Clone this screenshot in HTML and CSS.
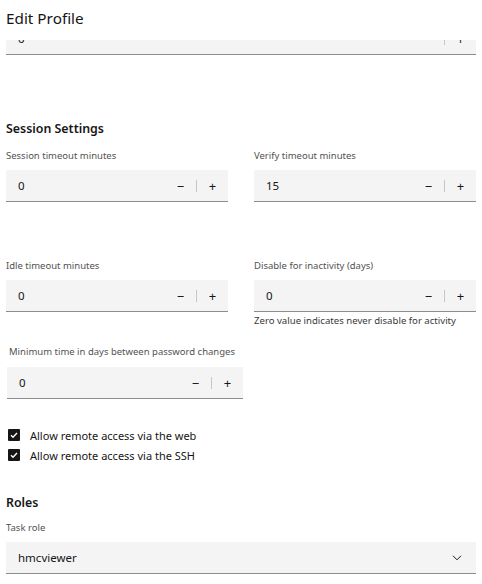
FILE: index.html
```html
<!DOCTYPE html>
<html>
<head>
	<title>Edit Profile</title>
	<meta charset="utf-8">
	<link rel="stylesheet" href="styles.css">
</head>
<body>
<div class="header">
	<h1 class="title">Edit Profile</h1>
</div>
<div class="body">
	<div class="content">
		<div class="field first">
			<span class="value">0</span>
			<div class="steps">
				<button class="step">&minus;</button>
				<span class="sep"></span>
				<button class="step">+</button>
			</div>
		</div>

		<h2 class="section">Session Settings</h2>
		<div class="grid">
			<div class="item">
				<label class="label">Session timeout minutes</label>
				<div class="field">
					<span class="value">0</span>
					<div class="steps">
						<button class="step">&minus;</button>
						<span class="sep"></span>
						<button class="step">+</button>
					</div>
				</div>
			</div>
			<div class="item">
				<label class="label">Verify timeout minutes</label>
				<div class="field">
					<span class="value">15</span>
					<div class="steps">
						<button class="step">&minus;</button>
						<span class="sep"></span>
						<button class="step">+</button>
					</div>
				</div>
			</div>
			<div class="item">
				<label class="label">Idle timeout minutes</label>
				<div class="field">
					<span class="value">0</span>
					<div class="steps">
						<button class="step">&minus;</button>
						<span class="sep"></span>
						<button class="step">+</button>
					</div>
				</div>
			</div>
			<div class="item">
				<label class="label">Disable for inactivity (days)</label>
				<div class="field">
					<span class="value">0</span>
					<div class="steps">
						<button class="step">&minus;</button>
						<span class="sep"></span>
						<button class="step">+</button>
					</div>
				</div>
				<div class="helper">Zero value indicates never disable for activity</div>
			</div>
		</div>

		<div class="item single">
			<label class="label">Minimum time in days between password changes</label>
			<div class="field">
				<span class="value">0</span>
				<div class="steps">
					<button class="step">&minus;</button>
					<span class="sep"></span>
					<button class="step">+</button>
				</div>
			</div>
		</div>

		<div class="checks">
			<label class="check"><span class="box"><svg width="10" height="10" viewBox="0 0 10 10"><path d="M2 5.2l2 2L8 3" fill="none" stroke="#fff" stroke-width="1.4"/></svg></span>Allow remote access via the web</label>
			<label class="check"><span class="box"><svg width="10" height="10" viewBox="0 0 10 10"><path d="M2 5.2l2 2L8 3" fill="none" stroke="#fff" stroke-width="1.4"/></svg></span>Allow remote access via the SSH</label>
		</div>

		<h2 class="section roles">Roles</h2>
		<label class="label">Task role</label>
		<div class="field select">
			<span class="value">hmcviewer</span>
			<svg class="chev" width="10" height="6" viewBox="0 0 10 6"><path d="M1 0.8l4 4 4-4" fill="none" stroke="#161616" stroke-width="1"/></svg>
		</div>
	</div>
</div>
</body>
</html>
```

FILE: styles.css
```css
body,div,h1,h2,label{margin:0;padding:0;}
body{
	background:#fff;
	color:#161616;
	font-family:"Noto Sans","DejaVu Sans",sans-serif;
	width:482px;
	height:584px;
	overflow:hidden;
}

.header{
	height:40px;
	padding-left:6px;
}
.title{
	font-size:15.3px;
	font-weight:400;
	line-height:20px;
	padding-top:8px;
}

.body{
	height:544px;
	overflow:hidden;
}
.content{
	margin-top:-17px;
	padding:0 6px;
}

.field{
	display:flex;
	align-items:center;
	height:31px;
	background:#f4f4f4;
	border-bottom:1px solid #8d8d8d;
	padding-left:12px;
}
.field .value{
	flex:1;
	font-size:11.5px;
}
.steps{
	display:flex;
	align-items:center;
	height:100%;
}
.step{
	width:31px;
	height:100%;
	border:0;
	padding:0;
	background:none;
	font:13px "Noto Sans",sans-serif;
	color:#161616;
}
.sep{
	width:1px;
	height:12px;
	background:#c6c6c6;
}

.section{
	font-size:12.4px;
	font-weight:600;
	line-height:16px;
	margin-top:66px;
}
.label{
	display:block;
	font-size:9.5px;
	line-height:14px;
	color:#525252;
	margin-bottom:7px;
	white-space:nowrap;
}

.grid{
	display:grid;
	grid-template-columns:222px 222px;
	column-gap:26px;
	row-gap:57px;
	margin-top:12px;
}
.helper{
	font-size:9.6px;
	line-height:14px;
	color:#393939;
	margin-top:2px;
}

.single{
	width:236px;
	margin:17px 0 0 1px;
}
.single .label{
	margin-left:2px;
	margin-bottom:8px;
}

.checks{
	margin:26px 0 0 2px;
}
.check{
	display:flex;
	align-items:center;
	height:20px;
	font-size:11px;
}
.box{
	display:flex;
	align-items:center;
	justify-content:center;
	width:12px;
	height:12px;
	background:#161616;
	border-radius:1px;
	margin-right:10px;
}

.roles{
	margin-top:30px;
	margin-bottom:10px;
}
.select{
	padding-right:14px;
}
.chev{
	display:block;
}
```
